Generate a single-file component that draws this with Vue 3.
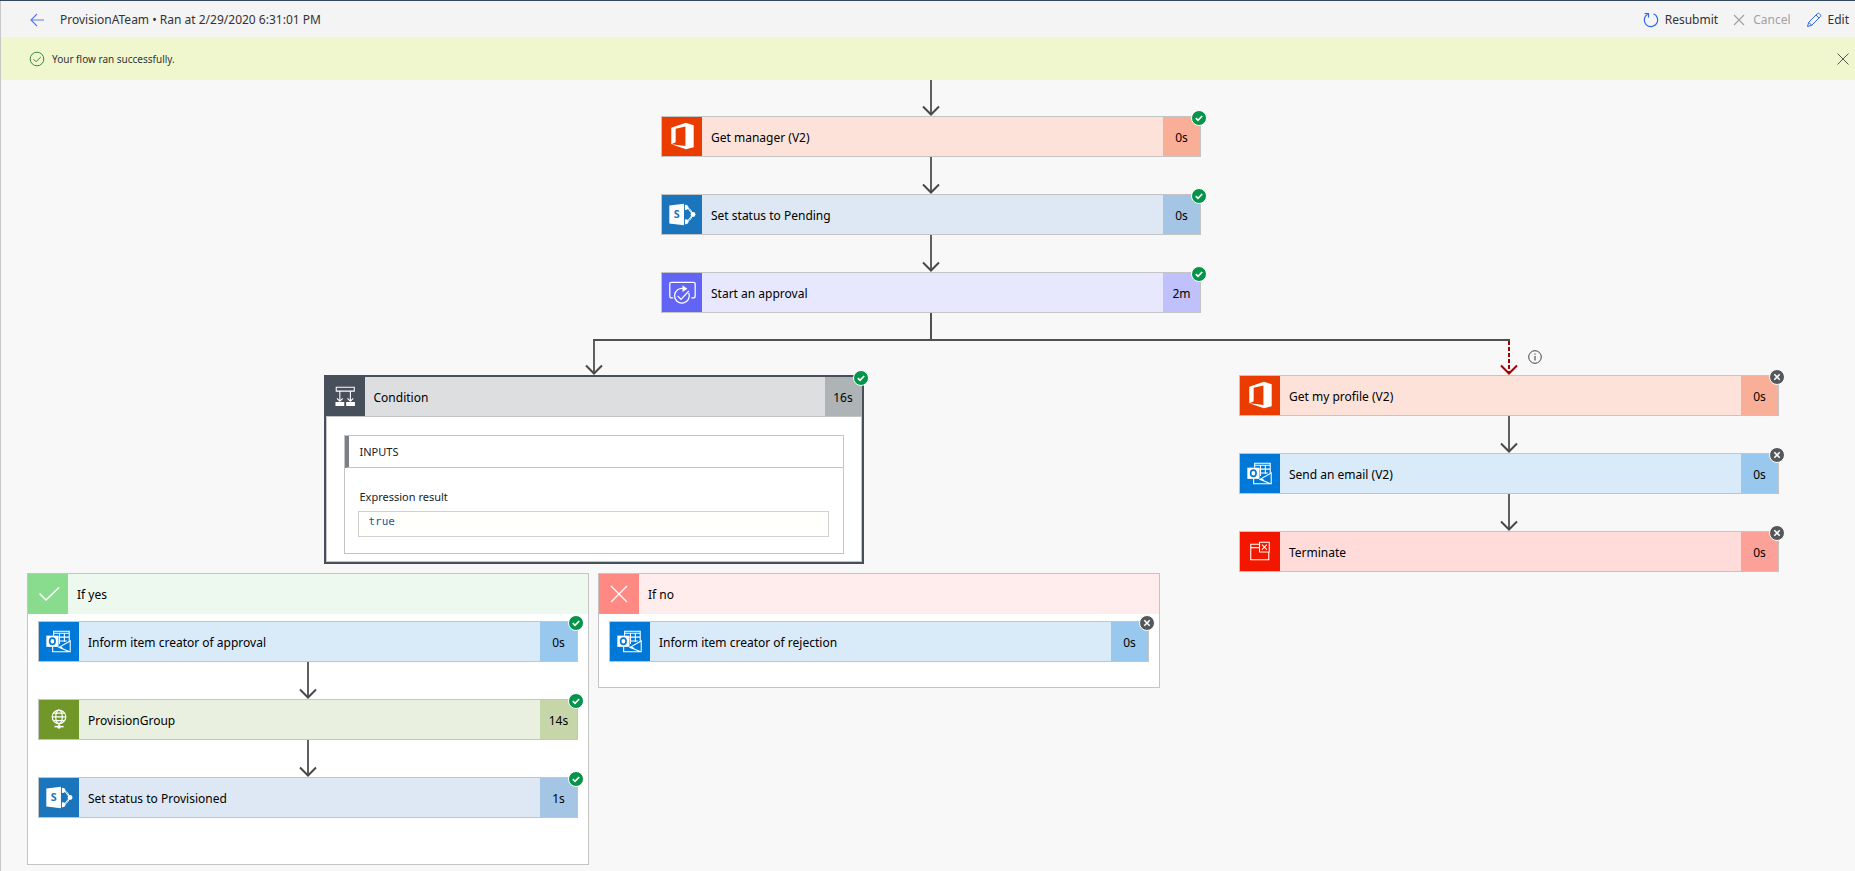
<script setup>
const mainSteps = [
  { title: 'Get manager (V2)', time: '0s', kind: 'office', status: 'ok' },
  { title: 'Set status to Pending', time: '0s', kind: 'sharepoint', status: 'ok' },
  { title: 'Start an approval', time: '2m', kind: 'approval', status: 'ok' },
]

const scopes = [
  {
    title: 'If yes',
    kind: 'yes',
    steps: [
      { title: 'Inform item creator of approval', time: '0s', kind: 'outlook', status: 'ok' },
      { title: 'ProvisionGroup', time: '14s', kind: 'http', status: 'ok' },
      { title: 'Set status to Provisioned', time: '1s', kind: 'sharepoint', status: 'ok' },
    ],
  },
  {
    title: 'If no',
    kind: 'no',
    steps: [
      { title: 'Inform item creator of rejection', time: '0s', kind: 'outlook', status: 'skipped' },
    ],
  },
]

const failureSteps = [
  { title: 'Get my profile (V2)', time: '0s', kind: 'office', status: 'skipped' },
  { title: 'Send an email (V2)', time: '0s', kind: 'outlook', status: 'skipped' },
  { title: 'Terminate', time: '0s', kind: 'terminate', status: 'skipped' },
]
</script>

<template>
  <svg class="sprite" aria-hidden="true">
    <symbol id="i-office" viewBox="0 0 40 40">
      <path fill="#fff" d="M9 11 24 6l8 2.5V31l-8 2.2L9 28l14.5 1.8V9.8L13.5 12v13.8L9 28z" />
    </symbol>
    <symbol id="i-sharepoint" viewBox="0 0 40 40">
      <path fill="none" stroke="#fff" stroke-width="1" d="M25 12.5 31 20l-6 7.500M25 12.500c3 1 5 4 6 7.500M25 27.500c3-1 5-4 6-7.500" />
      <path fill="#fff" d="M23 10.300a2.600 2.600 0 1 1 0 4.800zM23 25a2.600 2.600 0 1 1 0 4.800z" />
      <circle cx="31.300" cy="20" r="2.500" fill="#fff" />
      <path fill="#fff" d="M7 10.800 22 9v22L7 29.200z" />
      <text x="14.500" y="24" text-anchor="middle" font-family="Open Sans, sans-serif" font-weight="700" font-size="11" fill="#1b75bc">S</text>
    </symbol>
    <symbol id="i-approval" viewBox="0 0 40 40">
      <g fill="none" stroke="#fff" stroke-width="1.300">
        <path d="M11 25.500H9.500a2 2 0 0 1-2-2V11a1.500 1.500 0 0 1 1.500-1.500h23a1.500 1.500 0 0 1 1.500 1.500v12.500a2 2 0 0 1-2 2H29.500" />
        <path d="M22 16a7.600 7.600 0 1 0 5 4.500" />
        <path d="m15.500 23.500 3.500 3.500 8-8.500" />
      </g>
      <path fill="#fff" d="m20.500 12.500 5 3.700-5 3.300z" />
    </symbol>
    <symbol id="i-outlook" viewBox="0 0 40 40">
      <g fill="none" stroke="#fff" stroke-width="1.100">
        <path d="M14.500 14V9.500h16v11M14.500 11.500h16M19.500 15.500h11M20 19.500h8M20.500 11.500v11M25.500 11.500v9" />
        <path d="M13.500 25.500v5h18V19.500L20 26l11 4.500M21 25l3 2" />
      </g>
      <path fill="#fff" d="M7 14h12.500v11.500H7z" />
      <ellipse cx="13.200" cy="19.800" rx="2.800" ry="3.200" fill="none" stroke="#0078d7" stroke-width="1.700" />
    </symbol>
    <symbol id="i-http" viewBox="0 0 40 40">
      <g fill="none" stroke="#fff" stroke-width="1.200">
        <circle cx="20" cy="17.300" r="7" />
        <ellipse cx="20" cy="17.300" rx="3.400" ry="7" />
        <path d="M13 17.300h14M14.300 13.500h11.400M14.300 21.200h11.400M20 24.300v3" />
        <path stroke-width="1.500" d="M15.300 27.300h9.400" />
      </g>
      <circle cx="20" cy="27.500" r="1.900" fill="#fff" />
    </symbol>
    <symbol id="i-terminate" viewBox="0 0 40 40">
      <g fill="none" stroke="#fff" stroke-width="1.100">
        <path d="M19.500 12.500h-9v16h18.500V20.500M10.500 16h9M19.500 10.500h10v10h-10z" />
        <path d="m22 13 5 5M27 13l-5 5" />
      </g>
    </symbol>
    <symbol id="i-condition" viewBox="0 0 40 40">
      <g fill="none" stroke="#fff" stroke-width="1.100">
        <path d="M10.500 10.500h18.500v4H10.500zM14.200 14.500v10M25 14.500v10M11.200 22l3 2.800 3-2.800M22 22l3 2.800 3-2.800" />
      </g>
      <path fill="#fff" d="M9.700 25.700h9v4h-9zM20.700 25.700h9v4h-9z" />
    </symbol>
    <symbol id="i-yes" viewBox="0 0 40 40">
      <path fill="none" stroke="#fff" stroke-width="1.600" d="m11.500 19.500 6.500 6.500 13-12.500" />
    </symbol>
    <symbol id="i-no" viewBox="0 0 40 40">
      <path fill="none" stroke="#fff" stroke-width="1.200" d="m12 12 16 16M28 12 12 28" />
    </symbol>
    <symbol id="i-badge-ok" viewBox="0 0 16 16">
      <circle cx="8" cy="8" r="7.500" fill="#04944a" stroke="#fff" />
      <path fill="none" stroke="#fff" stroke-width="1.700" d="m4.800 8.200 2.200 2.200 4.200-4.400" />
    </symbol>
    <symbol id="i-badge-skipped" viewBox="0 0 16 16">
      <circle cx="8" cy="8" r="7.500" fill="#55585a" stroke="#fff" />
      <path fill="none" stroke="#fff" stroke-width="1.600" d="m5.300 5.300 5.400 5.400M10.700 5.300l-5.400 5.400" />
    </symbol>
    <symbol id="i-head" viewBox="0 0 18 11">
      <path fill="none" stroke="currentColor" stroke-width="2" d="m1 1.500 8 8 8-8" />
    </symbol>
  </svg>

  <div class="page">
    <header class="topbar">
      <button class="tool back" type="button" aria-label="Back">
        <svg width="16" height="16" viewBox="0 0 16 16"><path fill="none" stroke="#5b7cf5" stroke-width="1.200" d="M8 2 2 8l6 6M2 8h13" /></svg>
      </button>
      <h1 class="title">ProvisionATeam • Ran at 2/29/2020 6:31:01 PM</h1>
      <div class="tools">
        <button class="tool" type="button">
          <svg width="16" height="16" viewBox="0 0 16 16"><path fill="none" stroke="#2f66e8" stroke-width="1.200" d="M10.500 1.700a6.700 6.700 0 1 1-6 .5M1.500 1.500h4v4" /></svg>
          <span>Resubmit</span>
        </button>
        <button class="tool" type="button" disabled>
          <svg width="12" height="12" viewBox="0 0 12 12"><path fill="none" stroke="#a2a2a2" stroke-width="1.200" d="m1 1 10 10M11 1 1 11" /></svg>
          <span>Cancel</span>
        </button>
        <button class="tool" type="button">
          <svg width="16" height="16" viewBox="0 0 16 16"><path fill="none" stroke="#2f66e8" stroke-width="1" d="m1.500 14.500 1.200-4.200 8.600-8.600a1.400 1.400 0 0 1 2 0l1 1a1.400 1.400 0 0 1 0 2l-8.600 8.600zM2.700 10.300l3 3M10 3l3 3" /></svg>
          <span>Edit</span>
        </button>
      </div>
    </header>

    <div class="banner" role="status">
      <svg width="16" height="16" viewBox="0 0 16 16"><g fill="none" stroke="#3c8a3c"><circle cx="8" cy="8" r="6.800" /><path d="m4.500 8.200 2.500 2.500L11.800 6" /></g></svg>
      <span class="banner-text">Your flow ran successfully.</span>
      <button class="close" type="button" aria-label="Dismiss">
        <svg width="12" height="12" viewBox="0 0 12 12"><path fill="none" stroke="#555" d="m.5.5 11 11M11.500.5l-11 11" /></svg>
      </button>
    </div>

    <main class="canvas">
      <div class="stack">
        <template v-for="(step, i) in mainSteps" :key="step.title">
          <div class="connector" :class="{ entry: i === 0 }">
            <i class="shaft"></i>
            <svg class="head"><use href="#i-head" /></svg>
          </div>
          <button class="card" :class="step.kind" type="button">
            <svg class="icon"><use :href="'#i-' + step.kind" /></svg>
            <span class="name">{{ step.title }}</span>
            <span class="time">{{ step.time }}</span>
            <svg class="badge"><use :href="'#i-badge-' + step.status" /></svg>
          </button>
        </template>
        <i class="trunk"></i>
      </div>

      <div class="branches">
        <section class="branch">
          <div class="rail from-center"><i class="line"></i></div>
          <div class="stack">
            <div class="connector drop">
              <i class="shaft"></i>
              <svg class="head"><use href="#i-head" /></svg>
            </div>
            <article class="condition">
              <button class="condition-head" type="button">
                <svg class="icon"><use href="#i-condition" /></svg>
                <span class="name">Condition</span>
                <span class="time">16s</span>
              </button>
              <div class="condition-body">
                <div class="inputs">
                  <h2 class="inputs-title">INPUTS</h2>
                  <div class="field">
                    <label for="expression-result">Expression result</label>
                    <input id="expression-result" type="text" value="true" readonly />
                  </div>
                </div>
              </div>
              <svg class="badge"><use href="#i-badge-ok" /></svg>
            </article>
          </div>

          <div class="scopes">
            <section v-for="scope in scopes" :key="scope.title" class="scope" :class="scope.kind">
              <button class="scope-head" type="button">
                <svg class="icon"><use :href="'#i-' + scope.kind" /></svg>
                <span class="name">{{ scope.title }}</span>
              </button>
              <div class="scope-body stack">
                <template v-for="(step, i) in scope.steps" :key="step.title">
                  <div v-if="i > 0" class="connector">
                    <i class="shaft"></i>
                    <svg class="head"><use href="#i-head" /></svg>
                  </div>
                  <button class="card" :class="step.kind" type="button">
                    <svg class="icon"><use :href="'#i-' + step.kind" /></svg>
                    <span class="name">{{ step.title }}</span>
                    <span class="time">{{ step.time }}</span>
                    <svg class="badge"><use :href="'#i-badge-' + step.status" /></svg>
                  </button>
                </template>
              </div>
            </section>
          </div>
        </section>

        <section class="branch side">
          <div class="rail to-center"><i class="line"></i></div>
          <div class="stack">
            <template v-for="(step, i) in failureSteps" :key="step.title">
              <div class="connector" :class="{ drop: i === 0, failed: i === 0 }">
                <i class="shaft"></i>
                <svg class="head"><use href="#i-head" /></svg>
                <button v-if="i === 0" class="info" type="button" aria-label="Run after details">
                  <svg width="14" height="14" viewBox="0 0 14 14"><circle cx="7" cy="7" r="6.300" fill="none" stroke="#444" /><path stroke="#444" stroke-width="1.100" d="M7 6v4.500M7 3.500v1.200" /></svg>
                </button>
              </div>
              <button class="card" :class="step.kind" type="button">
                <svg class="icon"><use :href="'#i-' + step.kind" /></svg>
                <span class="name">{{ step.title }}</span>
                <span class="time">{{ step.time }}</span>
                <svg class="badge"><use :href="'#i-badge-' + step.status" /></svg>
              </button>
            </template>
          </div>
        </section>
      </div>
    </main>
  </div>
</template>

<style>
body {
  background: #f8f8f8;
}
</style>

<style scoped>
.sprite {
  position: absolute;
  width: 40px;
  height: 40px;
  visibility: hidden;
}
.page,
.page * {
  box-sizing: border-box;
}
.page {
  min-height: 100vh;
  display: flex;
  flex-direction: column;
  border-top: 1px solid #34495e;
  font-family: "Segoe UI", "Noto Sans", "Open Sans", sans-serif;
  font-size: 12px;
  line-height: 16px;
  color: #000;
  background: #f8f8f8;
}
button {
  margin: 0;
  padding: 0;
  border: 0;
  background: none;
  font: inherit;
  color: inherit;
  text-align: left;
  cursor: pointer;
}
svg {
  display: block;
  flex: none;
}

.topbar {
  display: flex;
  align-items: center;
  height: 36px;
  padding: 2px 6px 0 28px;
  border-left: 1px solid #c8c8c8;
  background: #f4f4f4;
  color: #333;
}
.title {
  flex: 1;
  margin: 0 0 0 15px;
  font-size: 12px;
  font-weight: 400;
}
.tools {
  display: flex;
  gap: 15px;
}
.tool {
  display: flex;
  align-items: center;
  gap: 6px;
}
.tool:disabled {
  color: #a2a2a2;
  gap: 8px;
}

.banner {
  display: flex;
  align-items: center;
  gap: 7px;
  height: 43px;
  padding: 0 6px 0 28px;
  border-left: 1px solid #c8c8c8;
  background: #f0f7cf;
  color: #333;
  font-size: 10px;
}
.banner-text {
  flex: 1;
}

.canvas {
  flex: 1;
  padding: 0 20px 6px 26px;
  border-left: 1px solid #c8c8c8;
  overflow-x: auto;
}
.stack {
  display: flex;
  flex-direction: column;
  align-items: center;
}

.connector {
  position: relative;
  display: flex;
  flex-direction: column;
  align-items: center;
  height: 37px;
  color: #484848;
}
.connector.entry {
  height: 36px;
}
.connector.drop {
  height: 34px;
}
.shaft {
  flex: 1;
  width: 2px;
  margin-bottom: -10px;
  background: #606060;
}
.head {
  width: 18px;
  height: 11px;
}
.failed {
  color: #a80000;
}
.failed .shaft {
  background: repeating-linear-gradient(#a80000 0 4px, transparent 4px 6px);
}
.info {
  position: absolute;
  left: calc(50% + 19px);
  top: 9px;
}
.trunk {
  width: 2px;
  height: 26px;
  background: #505050;
}

.card {
  position: relative;
  display: flex;
  width: 540px;
  height: 41px;
  border: 1px solid #c4c4c4;
}
.icon {
  width: 40px;
  height: 100%;
}
.name {
  flex: 1;
  align-self: center;
  padding: 2px 0 0 9px;
}
.time {
  display: flex;
  align-items: center;
  justify-content: center;
  width: 37px;
  height: 100%;
  padding-top: 2px;
}
.badge {
  position: absolute;
  top: -7px;
  right: -7px;
  width: 16px;
  height: 16px;
}

.office { background: #fde2d9; }
.office .icon { background: #eb3c00; }
.office .time { background: #f8ae97; }
.sharepoint { background: #dde8f4; }
.sharepoint .icon { background: #1b75bc; }
.sharepoint .time { background: #a4c5e4; }
.approval { background: #e7e7fe; }
.approval .icon { background: #6264f5; }
.approval .time { background: #c0c0fb; }
.outlook { background: #d9eaf8; }
.outlook .icon { background: #0078d7; }
.outlook .time { background: #98c8ee; }
.http { background: #e9f0df; }
.http .icon { background: #709727; }
.http .time { background: #c6d6a9; }
.terminate { background: #ffdcda; }
.terminate .icon { background: #f41700; }
.terminate .time { background: #fba198; }

.branches {
  display: flex;
  align-items: flex-start;
}
.branch {
  flex: none;
}
.side {
  flex: 1;
  min-width: 563px;
}
.side .stack {
  padding-left: 23px;
}
.rail {
  display: flex;
  height: 2px;
}
.from-center {
  justify-content: flex-end;
}
.line {
  width: calc(50% + 1px);
  background: #505050;
}
.to-center .line {
  width: calc(50% + 12px);
}

.condition {
  position: relative;
  width: 540px;
  border: 2px solid #474f5b;
}
.condition-head {
  display: flex;
  width: 100%;
  height: 39px;
  background: #dddee0;
}
.condition-head .icon {
  width: 39px;
  background: #474f5b;
}
.condition-head .time {
  background: #aeb3b6;
}
.condition-body {
  padding: 18px 17px 7px;
  border: 1px solid #c4c4c4;
  background: #fff;
}
.inputs {
  border: 1px solid #c4c4c4;
}
.inputs-title {
  margin: 0;
  padding: 8px 11px 7px;
  border-left: 4px solid #7b8088;
  border-bottom: 1px solid #c4c4c4;
  font-size: 11px;
  font-weight: 400;
  color: #222;
}
.field {
  display: flex;
  flex-direction: column;
  gap: 6px;
  padding: 21px 14px 16px 13px;
  font-size: 11px;
  color: #222;
}
.field label {
  padding-left: 2px;
}
.field input {
  width: 100%;
  height: 26px;
  margin: 0;
  padding: 0 10px 6px;
  border: 1px solid #d0d0d0;
  border-radius: 0;
  background: #fffffc;
  color: #1b56a5;
  font-family: Consolas, "DejaVu Sans Mono", monospace;
  font-size: 11px;
}

.scopes {
  display: flex;
  align-items: flex-start;
  gap: 9px;
  margin-top: 9px;
}
.scope {
  width: 562px;
  border: 1px solid #c4c4c4;
  background: #fff;
}
.scope-head {
  display: flex;
  width: 100%;
  height: 40px;
}
.scope-body {
  padding: 7px 10px 25px;
}
.yes .scope-body {
  padding-bottom: 46px;
}
.yes .scope-head { background: #edf8ef; }
.yes .scope-head .icon { background: #89db8e; }
.no .scope-head { background: #ffecec; }
.no .scope-head .icon { background: #fe8a83; }
</style>
